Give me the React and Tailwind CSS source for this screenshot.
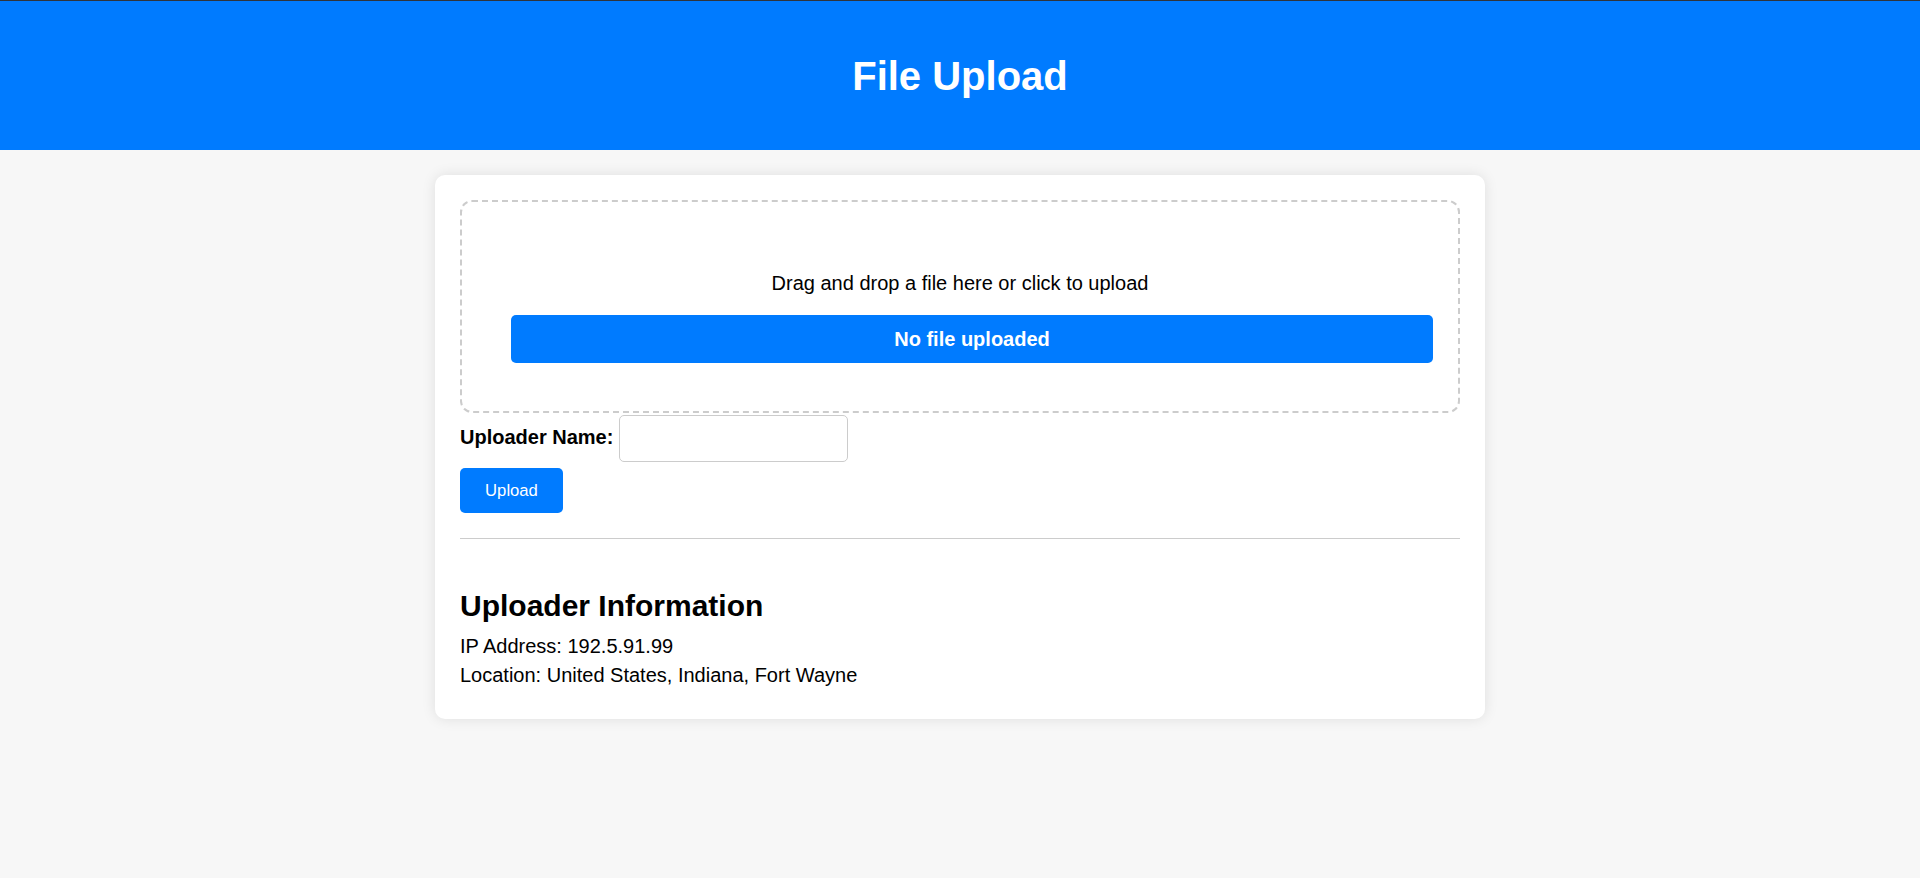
import React from "react";

export default function App() {
  return (
    <div className="min-h-screen bg-[#f7f7f7] font-['Liberation_Sans',Arial,sans-serif] text-black">
      {/* HEADER */}
      <header className="h-[150px] border-t border-[#2f343b] bg-[#007bff] flex items-center justify-center">
        <h1 className="text-[40px] leading-[46px] font-bold text-white">File Upload</h1>
      </header>

      {/* CARD */}
      <main className="w-[1050px] mx-auto mt-[25px] bg-white rounded-[10px] shadow-[0_0_14px_rgba(0,0,0,0.1)] px-[25px] pt-[25px] pb-[32px]">
        {/* DROPZONE */}
        <div className="h-[213px] border-2 border-dashed border-[#cccccc] rounded-[12px] px-[49px] pt-[70px] cursor-pointer">
          <p className="text-[20px] leading-[23px] text-center">
            Drag and drop a file here or click to upload
          </p>
          <div className="mt-[20px] mr-[-24px] h-[48px] rounded-[5px] bg-[#007bff] flex items-center justify-center">
            <span className="text-[20px] leading-[23px] font-bold text-white">No file uploaded</span>
          </div>
        </div>

        <div className="mt-[2px] flex items-center">
          <label className="text-[20px] leading-[23px] font-bold mt-[-2px]">Uploader Name:</label>
          <input
            type="text"
            className="ml-[6px] w-[229px] h-[47px] border border-[#cccccc] rounded-[5px] px-[10px] text-[20px] outline-none"
          />
        </div>

        <button className="mt-[6px] w-[103px] h-[45px] rounded-[5px] bg-[#007bff] text-white text-[16.67px] leading-[19px] block">
          Upload
        </button>

        <hr className="mt-[25px] border-0 border-t border-[#cccccc]" />

        {/* INFO */}
        <h2 className="mt-[50px] text-[30px] leading-[34px] font-bold">Uploader Information</h2>
        <p className="mt-[12px] text-[20px] leading-[23px]">IP Address: 192.5.91.99</p>
        <p className="mt-[6px] text-[20px] leading-[23px]">Location: United States, Indiana, Fort Wayne</p>
      </main>
    </div>
  );
}
